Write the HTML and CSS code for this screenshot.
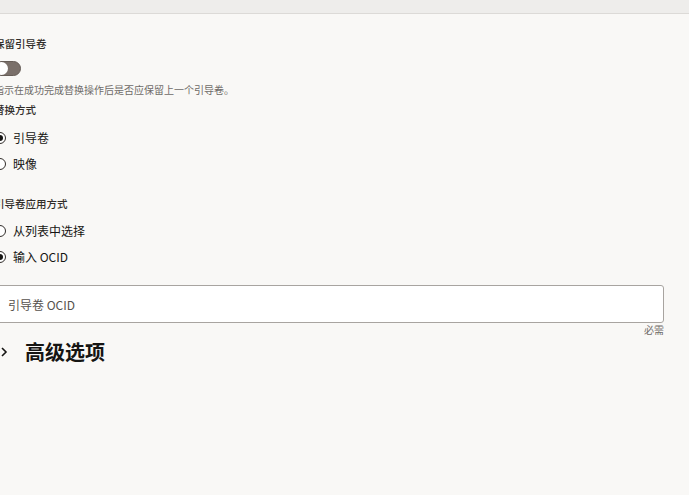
FILE: index.html
```html
<!DOCTYPE html>
<html lang="zh">
<head>
<meta charset="utf-8">
<link rel="stylesheet" href="styles.css">
</head>
<body>
<div class="topbar"></div>
<div class="content">
  <div class="label first">保留引导卷</div>
  <div class="toggle"><span class="knob"></span></div>
  <div class="helper">指示在成功完成替换操作后是否应保留上一个引导卷。</div>
  <div class="label group1">替换方式</div>
  <div class="radios">
    <div class="radio-row"><span class="radio checked"></span><span class="rlabel">引导卷</span></div>
    <div class="radio-row"><span class="radio"></span><span class="rlabel">映像</span></div>
  </div>
  <div class="label group2">引导卷应用方式</div>
  <div class="radios radios2">
    <div class="radio-row"><span class="radio"></span><span class="rlabel">从列表中选择</span></div>
    <div class="radio-row"><span class="radio checked"></span><span class="rlabel">输入 OCID</span></div>
  </div>
  <div class="input"><span class="placeholder">引导卷 OCID</span></div>
  <div class="required">必需</div>
  <div class="section">
    <svg class="chevron" width="8" height="12" viewBox="0 0 8 12"><path d="M2 2 L6 6 L2 10" fill="none" stroke="#161513" stroke-width="1.6"/></svg>
    <h2 class="section-title">高级选项</h2>
  </div>
</div>
</body>
</html>
```
FILE: styles.css
```css
html, body {
  margin: 0;
  padding: 0;
}
body {
  background: #f9f8f6;
  font-family: "Noto Sans", "Noto Sans CJK SC", sans-serif;
  color: #312d2a;
  width: 689px;
  height: 495px;
  overflow: hidden;
}
.topbar {
  height: 13px;
  background: #eeedeb;
  border-bottom: 1px solid #dcdad7;
}
.content {
  margin-left: -6px;
  margin-right: 25px;
  display: flex;
  flex-direction: column;
}
.label {
  font-family: "Noto Sans CJK SC", sans-serif;
  font-size: 10.5px;
  line-height: 14px;
  font-weight: 500;
  color: #312d2a;
}
.label.first {
  margin-top: 23px;
}
.toggle {
  margin-top: 10px;
  width: 28px;
  height: 15px;
  border-radius: 8px;
  background: #7a706a;
  border: 1px solid #665d57;
  box-sizing: border-box;
  display: flex;
  align-items: center;
  padding-left: 1px;
  margin-left: -1px;
}
.knob {
  width: 13px;
  height: 13px;
  border-radius: 50%;
  background: #ffffff;
}
.helper {
  margin-top: 7px;
  font-family: "Noto Sans CJK SC", sans-serif;
  font-size: 10px;
  line-height: 14px;
  color: #6f6b68;
}
.label.group1 {
  margin-top: 6px;
}
.radios {
  margin-top: 8px;
  display: flex;
  flex-direction: column;
}
.radios2 {
  margin-top: 7px;
}
.radio-row {
  height: 26px;
  display: flex;
  align-items: center;
  gap: 7px;
}
.radio {
  width: 12px;
  height: 12px;
  box-sizing: border-box;
  border: 1.3px solid #312d2a;
  border-radius: 50%;
  background: #ffffff;
  display: flex;
  align-items: center;
  justify-content: center;
}
.radio.checked::after {
  content: "";
  width: 6px;
  height: 6px;
  border-radius: 50%;
  background: #161513;
}
.rlabel {
  font-family: "Noto Sans CJK SC", sans-serif;
  font-size: 12px;
  line-height: 16px;
  color: #161513;
}
.label.group2 {
  margin-top: 20px;
}
.input {
  margin-top: 15px;
  height: 38px;
  box-sizing: border-box;
  background: #ffffff;
  border: 1px solid #a8a4a0;
  border-radius: 3px;
  display: flex;
  align-items: center;
  padding-left: 13px;
}
.placeholder {
  font-family: "Noto Sans CJK SC", sans-serif;
  font-size: 12px;
  color: #56514d;
}
.required {
  align-self: flex-end;
  font-family: "Noto Sans CJK SC", sans-serif;
  font-size: 10px;
  line-height: 13px;
  color: #6f6b68;
}
.section {
  margin-top: 3px;
  display: flex;
  align-items: center;
  height: 26px;
}
.chevron {
  margin-left: 6px;
}
.section-title {
  margin: 0 0 0 17px;
  font-family: "Noto Sans CJK SC", sans-serif;
  font-size: 20px;
  line-height: 26px;
  font-weight: 700;
  color: #161513;
}
```
